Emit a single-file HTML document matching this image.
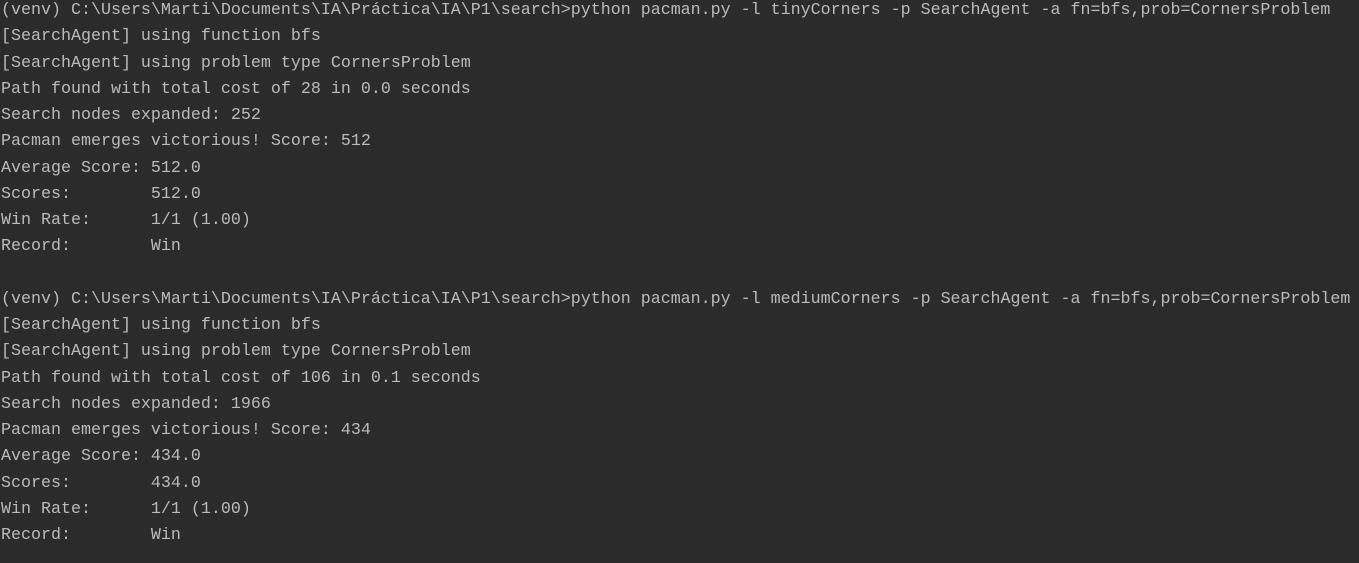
<!DOCTYPE html>
<html><head><style>
html,body{margin:0;padding:0;background:#2b2b2b;width:1359px;height:563px;overflow:hidden}
pre{position:absolute;left:1px;top:-2px;margin:0;font-family:"Liberation Mono",monospace;font-size:16.67px;line-height:26.25px;color:#bbbbbb;white-space:pre}
</style></head><body>
<pre>(venv) C:\Users\Marti\Documents\IA\Práctica\IA\P1\search&gt;python pacman.py -l tinyCorners -p SearchAgent -a fn=bfs,prob=CornersProblem
[SearchAgent] using function bfs
[SearchAgent] using problem type CornersProblem
Path found with total cost of 28 in 0.0 seconds
Search nodes expanded: 252
Pacman emerges victorious! Score: 512
Average Score: 512.0
Scores:        512.0
Win Rate:      1/1 (1.00)
Record:        Win

(venv) C:\Users\Marti\Documents\IA\Práctica\IA\P1\search&gt;python pacman.py -l mediumCorners -p SearchAgent -a fn=bfs,prob=CornersProblem
[SearchAgent] using function bfs
[SearchAgent] using problem type CornersProblem
Path found with total cost of 106 in 0.1 seconds
Search nodes expanded: 1966
Pacman emerges victorious! Score: 434
Average Score: 434.0
Scores:        434.0
Win Rate:      1/1 (1.00)
Record:        Win</pre>
</body></html>
